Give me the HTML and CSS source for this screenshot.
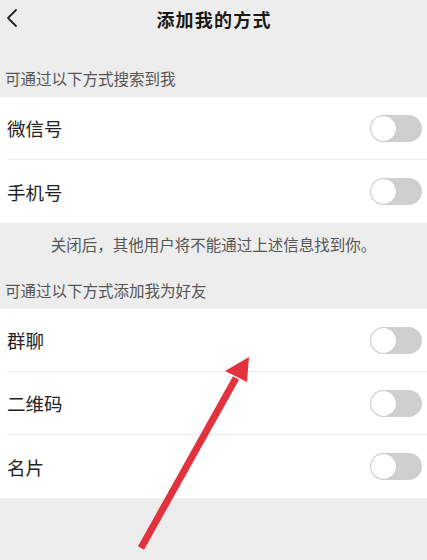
FILE: index.html
```html
<!DOCTYPE html>
<html lang="zh">
<head>
<meta charset="utf-8">
<link rel="stylesheet" href="styles.css">
</head>
<body>
<div class="page">
  <header class="nav">
    <svg class="back" width="12" height="20" viewBox="0 0 12 20"><path d="M10 2 L2 10 L10 18" fill="none" stroke="#222" stroke-width="1.8" stroke-linecap="round" stroke-linejoin="round"/></svg>
    <h1 class="title">添加我的方式</h1>
  </header>

  <div class="label">可通过以下方式搜索到我</div>
  <div class="group">
    <div class="row"><span class="name">微信号</span><span class="toggle"><span class="knob"></span></span></div>
    <div class="row"><span class="name">手机号</span><span class="toggle"><span class="knob"></span></span></div>
  </div>
  <div class="note">关闭后，其他用户将不能通过上述信息找到你。</div>

  <div class="label label2">可通过以下方式添加我为好友</div>
  <div class="group">
    <div class="row"><span class="name">群聊</span><span class="toggle"><span class="knob"></span></span></div>
    <div class="row"><span class="name">二维码</span><span class="toggle"><span class="knob"></span></span></div>
    <div class="row"><span class="name">名片</span><span class="toggle"><span class="knob"></span></span></div>
  </div>

  <svg class="arrow" width="427" height="560" viewBox="0 0 427 560">
    <line x1="141" y1="548" x2="236" y2="378" stroke="#e3323f" stroke-width="7"/>
    <polygon points="249,357 247,382 225,371" fill="#e3323f"/>
  </svg>
</div>
</body>
</html>
```
FILE: styles.css
```css
* { box-sizing: border-box; }
html, body { margin: 0; padding: 0; }
body {
  background: #ededed;
  font-family: "Noto Sans CJK SC", "Noto Sans", sans-serif;
  width: 427px;
  height: 560px;
  overflow: hidden;
}
.page { position: relative; width: 427px; height: 560px; }
.nav {
  height: 38px;
  display: flex;
  align-items: center;
  justify-content: center;
  position: relative;
}
.back { position: absolute; left: 6px; top: 8px; }
.title {
  margin: 0;
  font-size: 18px;
  font-weight: 700;
  color: #1a1a1a;
  letter-spacing: 1.2px;
  padding-left: 1px;
}
.label {
  padding: 29px 0 0 5px;
  height: 59px;
  font-size: 15.5px;
  color: #555;
  line-height: 22px;
}
.label2 { padding-top: 10px; height: 40px; }
.group { background: #fff; }
.row {
  height: 63px;
  display: flex;
  align-items: center;
  justify-content: space-between;
  margin-left: 7px;
  padding-right: 5px;
  border-bottom: 1px solid #ececec;
}
.group:first-of-type .row { height: 62.5px; }
.row:last-child { border-bottom: none; }
.name { font-size: 18.5px; color: #222; }
.toggle {
  width: 52px;
  height: 27px;
  border-radius: 14px;
  background: #cfcfcf;
  position: relative;
  display: block;
}
.knob {
  position: absolute;
  left: 1px;
  top: 1px;
  width: 25px;
  height: 25px;
  border-radius: 50%;
  background: #fff;
  box-shadow: 0 0 0 0.5px #c4c4c4;
}
.note {
  text-align: center;
  font-size: 15.5px;
  color: #555;
  padding-top: 10px;
  height: 46px;
}
.arrow { position: absolute; left: 0; top: 0; pointer-events: none; }
```
